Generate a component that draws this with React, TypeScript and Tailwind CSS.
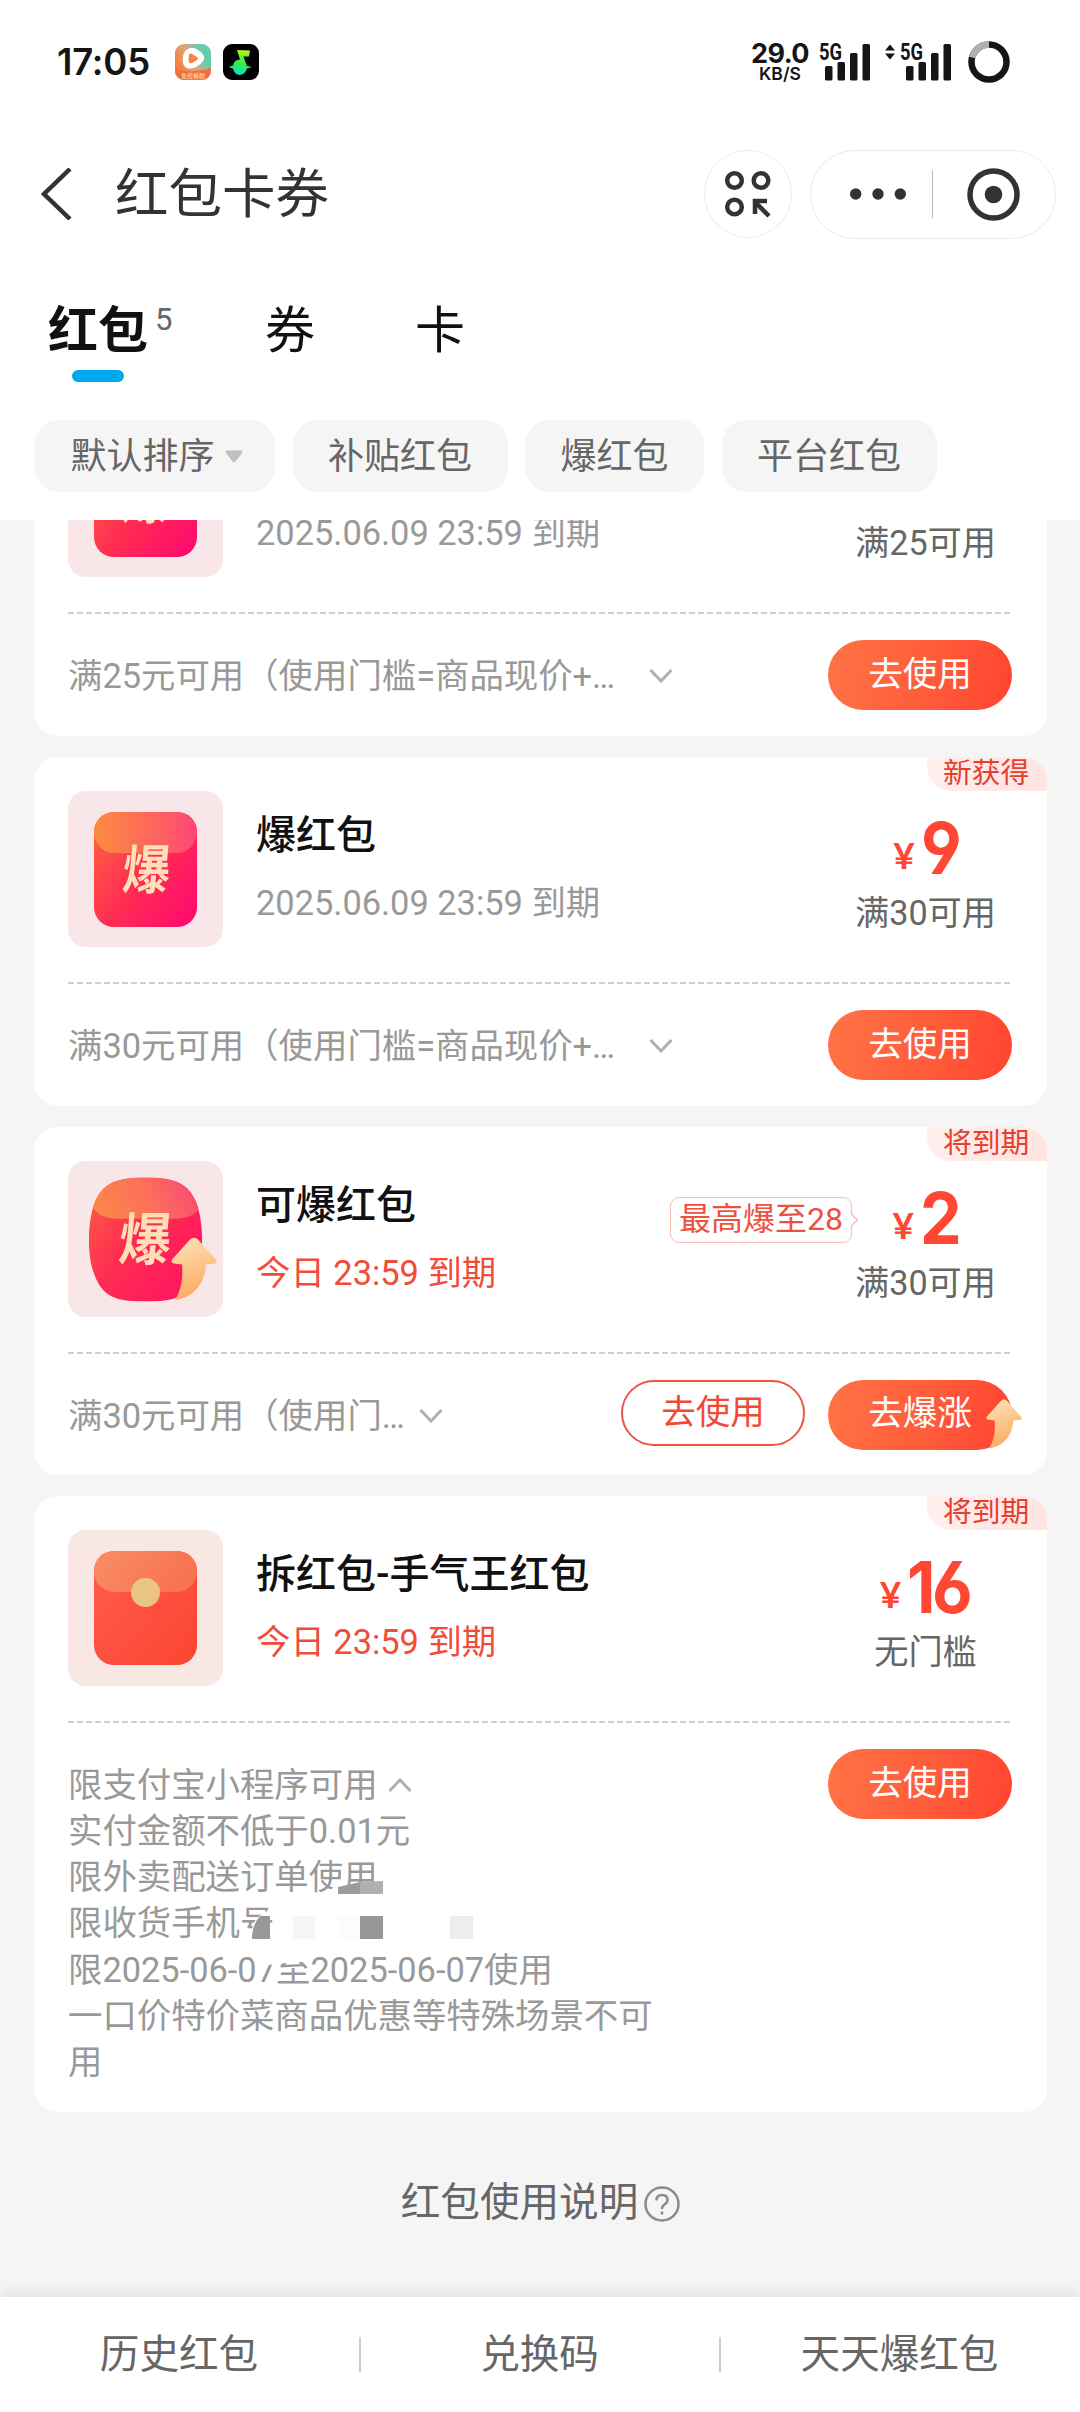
import type { ReactNode } from "react";

type Coupon = {
  id: number;
  icon: ReactNode;
  tileClass: string;
  title: string;
  date: string;
  urgent?: boolean;
  badge?: string;
  tip?: string;
  amount: string;
  threshold: string;
  rule: ReactNode;
  actions: ReactNode;
};

/* Coupon icons */

const BurstIcon = () => (
  <svg width="103" height="115" viewBox="0 0 103 115">
    <defs>
      <linearGradient id="burstBody" x1="0" y1="0.1" x2="1" y2="0.9">
        <stop offset="0" stopColor="#fd6540" />
        <stop offset="0.5" stopColor="#ff2d52" />
        <stop offset="1" stopColor="#ff0a70" />
      </linearGradient>
      <linearGradient id="burstFlap" x1="0" y1="0" x2="1" y2="0">
        <stop offset="0" stopColor="#fc8c3e" />
        <stop offset="0.5" stopColor="#fd6a58" />
        <stop offset="1" stopColor="#fd4777" />
      </linearGradient>
    </defs>
    <rect width="103" height="115" rx="20" fill="url(#burstBody)" />
    <path
      d="M20 0H83A20 20 0 0 1 103 20A20 21 0 0 1 83 41H20A20 21 0 0 1 0 20A20 20 0 0 1 20 0Z"
      fill="url(#burstFlap)"
    />
    <text
      x="0"
      y="0"
      textAnchor="middle"
      fontSize="50"
      transform="translate(51 77) skewX(-5) scale(0.95 1.06)"
      className="fill-[#ffdfb8] font-['Noto_Sans_CJK_SC',sans-serif] font-bold"
    >
      爆
    </text>
  </svg>
);

const GrowArrow = ({ id, className }: { id: string; className?: string }) => (
  <svg viewBox="0 0 46 64" className={className}>
    <defs>
      <linearGradient id={id} x1="0.3" y1="0" x2="0.6" y2="1">
        <stop offset="0" stopColor="#fde0b4" />
        <stop offset="1" stopColor="#fca75c" />
      </linearGradient>
    </defs>
    <path
      d="M19 2.500Q23 -1 27 2.500L45 23Q47 26.500 43 26.500L35 27.500C34 44 25 60 4 63C11 52 12 39 11 27.500L3 26.500Q-1 26 1.500 22Z"
      fill={`url(#${id})`}
    />
  </svg>
);

const GrowIcon = () => (
  <div className="relative">
    <svg width="155" height="156" viewBox="0 0 156 156" className="block">
      <defs>
        <linearGradient id="growBody" x1="0" y1="0.2" x2="0.9" y2="0.8">
          <stop offset="0" stopColor="#fc6a42" />
          <stop offset="0.45" stopColor="#ff2e50" />
          <stop offset="1" stopColor="#ff1263" />
        </linearGradient>
        <linearGradient id="growFlap" x1="0" y1="0.5" x2="1" y2="0.3">
          <stop offset="0" stopColor="#fa8846" />
          <stop offset="0.5" stopColor="#fb6f5b" />
          <stop offset="1" stopColor="#fb4378" />
        </linearGradient>
        <clipPath id="growClip">
          <path d="M78 16C108 16 121 22 129 41C137 62 137 97 129 115C121 136 108 141 78 141C48 141 35 136 27 115C19 97 19 62 27 41C35 22 48 16 78 16Z" />
        </clipPath>
      </defs>
      <g clipPath="url(#growClip)">
        <rect width="156" height="156" fill="url(#growBody)" />
        <path
          d="M20 10H138V40C130 55 120 57.500 106 57.500H50C36 57.500 28 53 22 41Z"
          fill="url(#growFlap)"
        />
      </g>
      <text
        x="0"
        y="0"
        textAnchor="middle"
        fontSize="54"
        transform="translate(76 99) skewX(-5) scale(0.97 1.06)"
        className="fill-[#ffdfb8] font-['Noto_Sans_CJK_SC',sans-serif] font-bold"
      >
        爆
      </text>
    </svg>
    <GrowArrow
      id="growTileArrow"
      className="absolute top-[76px] left-[103px] h-[64px] w-[46px]"
    />
  </div>
);

const EnvelopeIcon = () => (
  <svg width="103" height="114" viewBox="0 0 103 114">
    <defs>
      <linearGradient id="envBody" x1="0" y1="0" x2="1" y2="1">
        <stop offset="0" stopColor="#ff5d50" />
        <stop offset="1" stopColor="#fc4431" />
      </linearGradient>
      <linearGradient id="envFlap" x1="0" y1="0" x2="1" y2="0.3">
        <stop offset="0" stopColor="#f98d64" />
        <stop offset="1" stopColor="#f87350" />
      </linearGradient>
    </defs>
    <rect width="103" height="114" rx="20" fill="url(#envBody)" />
    <path
      d="M20 0H83A20 20 0 0 1 103 20A20 21 0 0 1 83 41H20A20 21 0 0 1 0 20A20 20 0 0 1 20 0Z"
      fill="url(#envFlap)"
    />
    <circle cx="51.500" cy="41.500" r="14.500" fill="#e9c581" />
  </svg>
);

/* Small parts */

const Chevron = ({ up, className }: { up?: boolean; className?: string }) => (
  <svg
    width="24"
    height="14"
    viewBox="0 0 24 14"
    fill="none"
    stroke="#b0b0b0"
    strokeWidth="3"
    className={className}
  >
    <path d={up ? "M1.500 13L12 2L22.500 13" : "M1.500 1L12 12L22.500 1"} />
  </svg>
);

const Signal = () => (
  <svg width="52" height="38" viewBox="0 0 52 38" fill="#151515" className="overflow-visible">
    <rect x="6" y="23" width="7.500" height="14.500" rx="1.500" />
    <rect x="18.500" y="19" width="7.500" height="18.500" rx="1.500" />
    <rect x="31" y="10" width="7.500" height="27.500" rx="1.500" />
    <rect x="43.500" y="1" width="7.500" height="36.500" rx="1.500" />
    <text
      x="0"
      y="17"
      fontSize="23"
      textLength="23"
      lengthAdjust="spacingAndGlyphs"
      className="font-[Roboto,sans-serif] font-bold"
    >
      5G
    </text>
  </svg>
);

const PrimaryButton = ({ children }: { children: ReactNode }) => (
  <button className="relative h-[70px] w-[184px] shrink-0 rounded-full bg-linear-[100deg,#ff7346,#ff5c3a_55%,#ff4431] pb-0.5 text-[34.56px] leading-none text-white">
    {children}
  </button>
);

const OutlineButton = ({ children }: { children: ReactNode }) => (
  <button className="mr-[23px] h-[66px] w-[184px] shrink-0 rounded-full border-2 border-[#ee5547] text-[34.56px] leading-none text-[#f04a36]">
    {children}
  </button>
);

// grey mosaic blocks that hide the phone number
const PhoneMask = () => (
  <svg
    width="480"
    height="100"
    viewBox="0 0 480 100"
    className="absolute top-[128px] left-0"
  >
    <path d="M250 16Q262 13 270 9V17H250Z" fill="#fff" />
    <path d="M270 10L292 5V17H270Z" fill="#9c9c9c" />
    <path d="M292 5L315 4V17H292Z" fill="#b0b0b0" />
    <path d="M202 32V64H184Q182 48 190 40Z" fill="#fff" />
    <path d="M184 62Q184 48 192 39H202V62Z" fill="#989898" />
    <rect x="225" y="39" width="22" height="23" fill="#f6f6f6" />
    <rect x="270" y="39" width="22" height="23" fill="#fcfcfc" />
    <rect x="292" y="39" width="23" height="23" fill="#979797" />
    <rect x="382" y="39" width="23" height="23" fill="#ededed" />
    <path d="M188 68H242V84Q224 86 210 86L188 91Z" fill="#fff" />
    <path d="M452 68H484V79H452Z" fill="#fff" />
  </svg>
);

const CouponCard = ({ coupon }: { coupon: Coupon }) => (
  <article className="relative flex shrink-0 flex-col rounded-[24px] bg-white pt-[34px] pr-[35px] pb-[25.6px] pl-[34px]">
    {coupon.badge && (
      <span className="absolute top-0 right-0 h-[34px] w-[120px] rounded-tr-[24px] rounded-bl-[24px] bg-linear-to-r from-[#ffefed] to-[#ffe4e1] pl-[16px] text-[28.8px] leading-[33px] whitespace-nowrap text-[#e5402f]">
        {coupon.badge}
      </span>
    )}
    <div className="flex h-[156px]">
      <div
        className={`flex h-[156px] w-[155px] shrink-0 items-center justify-center rounded-[18px] ${coupon.tileClass}`}
      >
        {coupon.icon}
      </div>
      <div className="ml-[33px] flex-1">
        <h2 className="mt-[17px] text-[40px] leading-[56px] font-medium text-[#111]">
          {coupon.title}
        </h2>
        <p
          className={`mt-[15px] text-[34.400px] leading-[48px] ${coupon.urgent ? "text-[#f24c39]" : "text-[#999]"}`}
        >
          {coupon.date}
        </p>
      </div>
      {coupon.tip && (
        <div className="relative z-10 mt-[36px] -mr-[13px] h-[46px] w-[182px] rounded-[9px] border-[1.500px] border-[#f8bdb7] text-center text-[32px] leading-[43px] whitespace-nowrap text-[#ee5140]">
          {coupon.tip}
          <svg
            width="9"
            height="18"
            viewBox="0 0 9 18"
            className="absolute top-[13px] -right-[8px]"
          >
            <path d="M0 0.500L2 1Q3 5 6.500 8Q7.500 9 6.500 10Q3 13 2 17L0 17.500Z" fill="#fff" />
            <path
              d="M1 0.500Q2 5 6.500 8Q7.500 9 6.500 10Q2 13 1 17.500"
              fill="none"
              stroke="#f8bdb7"
              strokeWidth="1.500"
            />
          </svg>
        </div>
      )}
      <div className="flex w-[173px] shrink-0 flex-col items-center">
        <div className="mt-[19px] flex h-[80px] items-baseline font-[Inter,sans-serif] font-bold text-[#ff4733] [font-feature-settings:'cv03','cv04']">
          <span className="pb-[5px] font-[Lato,sans-serif] text-[37px] leading-[66px]">
            <span className="relative -top-[5px]">¥</span>
          </span>
          <span className="-mr-[3px] ml-[6px] inline-block origin-left scale-x-92 text-[72px] leading-[76px] tracking-[-4px]">
            {coupon.amount}
          </span>
        </div>
        <p className="text-[34.200px] leading-[46px] whitespace-nowrap text-[#666]">
          {coupon.threshold}
        </p>
      </div>
    </div>
    <div className="mt-[35px] h-0.5 bg-[repeating-linear-gradient(90deg,#cfcfcf_0_6px,transparent_6px_9px)]" />
    <div className="mt-[26px] flex">
      <div className="relative flex-1 pt-[13px] pb-0.5 text-[34.400px] leading-[46.08px] text-[#999]">
        {coupon.rule}
      </div>
      {coupon.actions}
    </div>
  </article>
);

const coupons: Coupon[] = [
  {
    id: 1,
    icon: <BurstIcon />,
    tileClass: "bg-[#f9e6e8]",
    title: "爆红包",
    date: "2025.06.09 23:59 到期",
    amount: "8",
    threshold: "满25可用",
    rule: (
      <div className="flex items-center">
        <span className="w-[581px]">满25元可用（使用门槛=商品现价+…</span>
        <Chevron />
      </div>
    ),
    actions: <PrimaryButton>去使用</PrimaryButton>,
  },
  {
    id: 2,
    icon: <BurstIcon />,
    tileClass: "bg-[#f9e6e8]",
    title: "爆红包",
    date: "2025.06.09 23:59 到期",
    badge: "新获得",
    amount: "9",
    threshold: "满30可用",
    rule: (
      <div className="flex items-center">
        <span className="w-[581px]">满30元可用（使用门槛=商品现价+…</span>
        <Chevron />
      </div>
    ),
    actions: <PrimaryButton>去使用</PrimaryButton>,
  },
  {
    id: 3,
    icon: <GrowIcon />,
    tileClass: "bg-[#f9e6e8]",
    title: "可爆红包",
    date: "今日 23:59 到期",
    urgent: true,
    badge: "将到期",
    tip: "最高爆至28",
    amount: "2",
    threshold: "满30可用",
    rule: (
      <div className="flex items-center">
        <span className="w-[351px]">满30元可用（使用门…</span>
        <Chevron />
      </div>
    ),
    actions: (
      <>
        <OutlineButton>去使用</OutlineButton>
        <PrimaryButton>
          去爆涨
          <GrowArrow
            id="growButtonArrow"
            className="absolute top-[18px] left-[158px] h-[52px] w-[36px]"
          />
        </PrimaryButton>
      </>
    ),
  },
  {
    id: 4,
    icon: <EnvelopeIcon />,
    tileClass: "bg-[#f9e7e4]",
    title: "拆红包-手气王红包",
    date: "今日 23:59 到期",
    urgent: true,
    badge: "将到期",
    amount: "16",
    threshold: "无门槛",
    rule: (
      <>
        <p className="flex items-center">
          限支付宝小程序可用
          <Chevron up className="ml-[10px]" />
        </p>
        <p>实付金额不低于0.01元</p>
        <p>限外卖配送订单使用</p>
        <p>限收货手机号</p>
        <p>限2025-06-07至2025-06-07使用</p>
        <p className="w-[600px]">一口价特价菜商品优惠等特殊场景不可用</p>
        <PhoneMask />
      </>
    ),
    actions: <PrimaryButton>去使用</PrimaryButton>,
  },
];

const StatusBar = () => (
  <div className="flex h-[124px] items-center pr-[70px] pl-[57px]">
    <span className="w-[118px] font-[Inter,sans-serif] text-[36.500px] font-semibold tracking-[-0.2px] text-[#151515]">
      17:05
    </span>
    <svg width="36" height="36" viewBox="0 0 36 36">
      <defs>
        <linearGradient id="videoBg" x1="0" y1="0.7" x2="1" y2="0.2">
          <stop offset="0" stopColor="#fb7434" />
          <stop offset="0.45" stopColor="#dfa772" />
          <stop offset="0.8" stopColor="#62cdb0" />
        </linearGradient>
        <clipPath id="videoClip">
          <rect width="36" height="36" rx="9" />
        </clipPath>
      </defs>
      <g clipPath="url(#videoClip)">
        <rect width="36" height="36" fill="url(#videoBg)" />
        <path d="M0 25Q18 30 36 24V36H0Z" fill="#f96c3c" />
        <path
          d="M13 5Q17 2 23 6Q30 10 29 15Q28 19 21 23Q14 26 10 23Q7 20 8 12Q9 7 13 5Z"
          fill="#fff"
        />
        <path d="M14 10.500Q15 9 17 10L22 13Q24 14.500 22 16L17 19Q14.500 20 14 18Q13 14 14 10.500Z" fill="#f88442" />
        <text
          x="18"
          y="34"
          fontSize="6"
          textAnchor="middle"
          className="fill-[#ffe0bd] font-['Noto_Sans_CJK_SC',sans-serif]"
        >
          免费看剧
        </text>
      </g>
    </svg>
    <svg width="36" height="36" viewBox="0 0 36 36" className="ml-[12px]">
      <defs>
        <linearGradient id="musicNote" x1="0.6" y1="0" x2="0.4" y2="1">
          <stop offset="0" stopColor="#b9f51c" />
          <stop offset="0.5" stopColor="#35ee4e" />
          <stop offset="1" stopColor="#09e0bd" />
        </linearGradient>
      </defs>
      <rect width="36" height="36" rx="9" fill="#000" />
      <path
        d="M14 6L27 6.500L26 12.500H20.500L22 17Q23 19 24 22L29 23L24 24.500Q22 31 16.500 31Q11 30 10 24.500L5.500 23L10 21.500Q11 16 17 15.500Z"
        fill="url(#musicNote)"
      />
    </svg>
    <div className="ml-auto flex items-center">
      <div className="flex w-[60px] flex-col items-center font-[Inter,sans-serif] text-[#151515]">
        <span className="text-[27px] leading-[22px] font-bold tracking-[-0.6px]">29.0</span>
        <span className="text-[17.500px] leading-[17px] font-semibold">KB/S</span>
      </div>
      <div className="ml-[9px]">
        <Signal />
      </div>
      <svg width="12" height="16" viewBox="0 0 12 16" fill="#151515" className="mb-[20px] ml-[13px]">
        <path d="M6 0.500L11 6.500H1ZM6 15.500L11 9.500H1Z" />
      </svg>
      <div className="ml-[4px]">
        <Signal />
      </div>
      <svg width="42" height="42" viewBox="0 0 42 42" fill="none" strokeWidth="6.500" className="ml-[16px]">
        <circle cx="21" cy="21" r="17.500" stroke="#151515" />
        <path d="M4.100 16.500A17.500 17.500 0 0 1 21 3.500" stroke="#b0b0b0" />
      </svg>
    </div>
  </div>
);

const TitleBar = () => (
  <div className="flex h-[140px] items-center pr-[24px] pl-[41px]">
    <svg width="31" height="52" viewBox="0 0 31 52" fill="none" stroke="#333" strokeWidth="4.500">
      <path d="M29 1L3 26L29 51" />
    </svg>
    <h1 className="mt-[2px] ml-[43px] text-[53.500px] leading-[60px] text-[#333]">红包卡券</h1>
    <div className="ml-auto flex items-center gap-[18px]">
      <div className="flex size-[88px] items-center justify-center rounded-full border-[1.500px] border-[#ebebeb]">
        <svg width="48" height="48" viewBox="0 0 48 48" fill="none" stroke="#333" strokeWidth="4.500">
          <circle cx="10.500" cy="10.500" r="7.300" />
          <circle cx="37" cy="10.500" r="7.300" />
          <circle cx="10.500" cy="37" r="7.300" />
          <path d="M45 46L31 32" />
          <path d="M31 44V31H43" />
        </svg>
      </div>
      <div className="flex h-[89px] w-[246px] items-center rounded-full border-[1.500px] border-[#ebebeb]">
        <svg width="56" height="12" viewBox="0 0 56 12" fill="#333" className="ml-[39px]">
          <circle cx="5.700" cy="6" r="5.700" />
          <circle cx="28" cy="6" r="5.700" />
          <circle cx="50.300" cy="6" r="5.700" />
        </svg>
        <div className="ml-[26px] h-[48px] w-px bg-[#bbb]" />
        <svg width="53" height="53" viewBox="0 0 53 53" className="ml-[34px]">
          <circle cx="26.500" cy="26.500" r="23.500" fill="none" stroke="#333" strokeWidth="5.500" />
          <circle cx="26.500" cy="26.500" r="8.800" fill="#333" />
        </svg>
      </div>
    </div>
  </div>
);

const Tabs = () => (
  <div className="flex h-[156px] pt-[32px] pl-[48px] text-[50px] leading-[70px] text-[#111]">
    <div className="flex w-[217px]">
      <div>
        <span className="font-bold">红包</span>
        <div className="mx-auto mt-[4px] h-[12px] w-[52px] rounded-full bg-[#00a9ee]" />
      </div>
      <span className="ml-[7px] text-[31px] leading-[48px] text-[#666]">5</span>
    </div>
    <span className="w-[150px]">券</span>
    <span>卡</span>
  </div>
);

const filters = ["默认排序", "补贴红包", "爆红包", "平台红包"];

const Filters = () => (
  <div className="flex h-[100px] gap-[17.500px] pl-[35px]">
    {filters.map((label, index) => (
      <button
        key={label}
        className="flex h-[72px] items-center rounded-[24px] bg-[#f5f5f5] px-[35.500px] pt-px text-[36px] leading-none text-[#666]"
      >
        {label}
        {index === 0 && (
          <svg width="18" height="13" viewBox="0 0 18 13" className="-mr-[3px] ml-[10px]">
            <path d="M2 0.500H16Q18.500 1 17 3L10.500 11.500Q9 13.500 7.500 11.500L1 3Q-0.500 1 2 0.500Z" fill="#c0c0c0" />
          </svg>
        )}
      </button>
    ))}
  </div>
);

const footerLinks = ["历史红包", "兑换码", "天天爆红包"];

const App = () => {
  return (
    <div className="flex h-[2412px] w-[1080px] flex-col overflow-hidden bg-[#f5f5f5] font-[Roboto,'Noto_Sans_CJK_SC',sans-serif]">
      <header className="h-[520px] shrink-0 bg-white">
        <StatusBar />
        <TitleBar />
        <Tabs />
        <Filters />
      </header>

      {/* Coupon list, scrolled part of the way */}
      <main className="min-h-0 flex-1 overflow-hidden pr-[33px] pl-[34px]">
        <div className="-mt-[132.600px] flex flex-col gap-[21px]">
          {coupons.map((coupon) => (
            <CouponCard key={coupon.id} coupon={coupon} />
          ))}
        </div>
        <div className="mt-[62px] flex items-center justify-center gap-[6px] text-[39.600px] leading-[58px] text-[#666]">
          红包使用说明
          <svg width="36" height="36" viewBox="0 0 36 36" fill="none" stroke="#8c8c8c" strokeWidth="2.500" className="mt-[2px]">
            <circle cx="18" cy="18" r="16.500" />
            <path d="M12.500 14.500Q12.500 9 18 9T23.500 14Q23.500 16.500 20.500 18.500Q18 20 18 23" />
            <path d="M18 25.500V28.500" />
          </svg>
        </div>
      </main>

      <footer className="z-10 flex h-[115px] shrink-0 items-center bg-white shadow-[0_-2px_16px_rgba(0,0,0,0.1)]">
        {footerLinks.map((label, index) => (
          <div key={label} className="flex flex-1 items-center">
            {index > 0 && <div className="-ml-px h-[35px] w-[2px] bg-[#ccc]" />}
            <span className="flex-1 pr-[2px] text-center text-[39.600px] leading-[56px] text-[#666]">
              {label}
            </span>
          </div>
        ))}
      </footer>
    </div>
  );
};

export default App;
